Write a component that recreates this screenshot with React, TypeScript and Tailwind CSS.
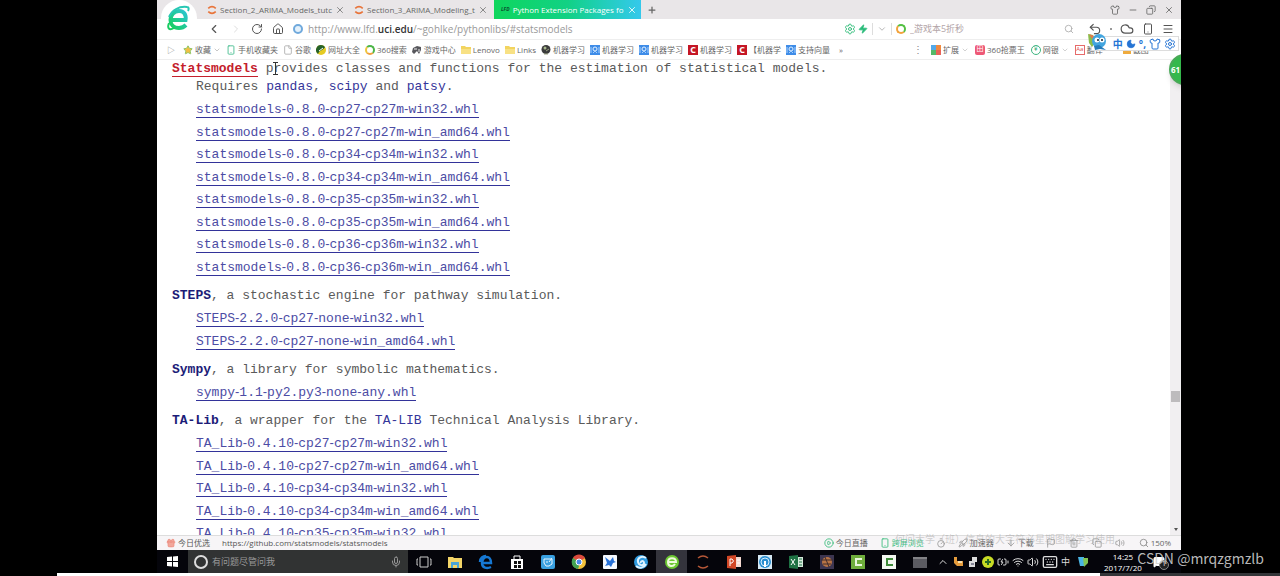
import type { ReactNode } from "react";
import {
    ArrowDown, BatteryCharging, ChevronDown, ChevronLeft, ChevronRight, ChevronUp, Cloud, Copy, File, Flag, Gift,
    House, Keyboard, Menu, MessageSquare, Mic, Minus, Moon, Plus, RotateCw, Rocket, Search, Settings,
    Shirt, Smartphone, Star, Timer, Trash2, Undo2, Volume2, Wifi, X, Zap, CirclePlay,
} from "lucide-react";

const UI_FONT = "font-['Open_Sans','Noto_Sans_CJK_SC',sans-serif]";

type PackageItem = {
    name: string;
    active?: boolean;
    description: ReactNode;
    note?: ReactNode;
    files: string[];
};

const Ref = ({ children }: { children: ReactNode }) => (
    <a href="#ref" className="text-[#35359a]">{children}</a>
);

const packages: PackageItem[] = [
    {
        name: "Statsmodels",
        active: true,
        description: " provides classes and functions for the estimation of statistical models.",
        note: <>Requires <Ref>pandas</Ref>, <Ref>scipy</Ref> and <Ref>patsy</Ref>.</>,
        files: [
            "statsmodels-0.8.0-cp27-cp27m-win32.whl",
            "statsmodels-0.8.0-cp27-cp27m-win_amd64.whl",
            "statsmodels-0.8.0-cp34-cp34m-win32.whl",
            "statsmodels-0.8.0-cp34-cp34m-win_amd64.whl",
            "statsmodels-0.8.0-cp35-cp35m-win32.whl",
            "statsmodels-0.8.0-cp35-cp35m-win_amd64.whl",
            "statsmodels-0.8.0-cp36-cp36m-win32.whl",
            "statsmodels-0.8.0-cp36-cp36m-win_amd64.whl",
        ],
    },
    {
        name: "STEPS",
        description: ", a stochastic engine for pathway simulation.",
        files: ["STEPS-2.2.0-cp27-none-win32.whl", "STEPS-2.2.0-cp27-none-win_amd64.whl"],
    },
    {
        name: "Sympy",
        description: ", a library for symbolic mathematics.",
        files: ["sympy-1.1-py2.py3-none-any.whl"],
    },
    {
        name: "TA-Lib",
        description: <>, a wrapper for the <Ref>TA-LIB</Ref> Technical Analysis Library.</>,
        files: [
            "TA_Lib-0.4.10-cp27-cp27m-win32.whl",
            "TA_Lib-0.4.10-cp27-cp27m-win_amd64.whl",
            "TA_Lib-0.4.10-cp34-cp34m-win32.whl",
            "TA_Lib-0.4.10-cp34-cp34m-win_amd64.whl",
            "TA_Lib-0.4.10-cp35-cp35m-win32.whl",
        ],
    },
];

// the dashes in file names come from a proportional font
function FileLink({ file }: { file: string }) {
    const parts = file.split("-");
    return (
        <a href={"#" + file} className="border-b border-[#33339a] text-[#4c4ca4]">
            {parts.map((part, i) => (
                <span key={i}>
                    {i > 0 && <span className="font-['Liberation_Sans',sans-serif] leading-none">-</span>}
                    {part}
                </span>
            ))}
        </a>
    );
}

function PackageSection({ item }: { item: PackageItem }) {
    return (
        <section className="mb-2">
            <p>
                <a
                    href={"#" + item.name}
                    className={item.active ? "font-bold text-[#c4202c] border-b border-[#c4202c]" : "font-bold text-[#1c1c78]"}
                >
                    {item.name}
                </a>
                {item.description}
            </p>
            {item.note && <p className="pl-6">{item.note}</p>}
            <ul className="mt-[3px] pl-6 leading-[22px]">
                {item.files.map((file) => (
                    <li key={file} className="odd:mb-px">
                        <FileLink file={file} />
                    </li>
                ))}
            </ul>
        </section>
    );
}

function BrowserLogo() {
    return (
        <div className="absolute left-1 top-0 z-10 flex size-9 items-center justify-center rounded-full bg-white">
            <svg viewBox="0 0 24 26" className="h-[26px] w-6" fill="none">
                <defs>
                    <linearGradient id="logo" x1="0" y1="1" x2="1" y2="0">
                        <stop offset="0" stopColor="#16cf5c" />
                        <stop offset="1" stopColor="#2bc5d2" />
                    </linearGradient>
                </defs>
                <path
                    d="M4 15h14.500C19.500 9 16.500 6 12 6c-5 0-8.500 4-8.500 9 0 4.500 3 8 8.500 8 3 0 5-1 7-3"
                    stroke="url(#logo)"
                    strokeWidth="4"
                />
                <path d="M2 12C5 5 12 1 20 2c2 0 2 2 1 4" stroke="#28c8b4" strokeWidth="2" />
                <path d="M2 18c-2 5 0 8 5 5" stroke="#19cd62" strokeWidth="2" />
            </svg>
        </div>
    );
}

function JupyterMark({ className }: { className: string }) {
    return (
        <svg viewBox="0 0 12 12" className={className} fill="none" stroke="#e8743a" strokeWidth="2">
            <path d="M1.500 4Q6 0 10.500 4M1.500 8Q6 12 10.500 8" />
        </svg>
    );
}

function Tab({ title }: { title: string }) {
    return (
        <div className="flex w-[147px] items-center gap-[3px] px-[7px]">
            <JupyterMark className="size-2.5 shrink-0" />
            <button className="flex-1 text-left whitespace-nowrap">{title}</button>
            <button aria-label="Close tab"><X className="size-2.5 text-[#777]" /></button>
        </div>
    );
}

function TabBar() {
    return (
        <div className="flex h-[19px] shrink-0 bg-[#e9e6e8] pl-[43px] text-[8px] text-[#666]">
            <Tab title="Section_2_ARIMA_Models_tutc" />
            <Tab title="Section_3_ARIMA_Modeling_t" />
            <div className="flex w-[147px] items-center gap-[3px] bg-linear-to-r from-[#10d65c] via-[#12d184] to-[#35c8ec] px-[7px] text-white">
                <span className="text-[5px] font-bold text-[#0b5130] italic">LFD</span>
                <button className="flex-1 text-left whitespace-nowrap">Python Extension Packages fo</button>
                <button aria-label="Close tab"><X className="size-2.5" /></button>
            </div>
            <button aria-label="New tab" className="px-1.5"><Plus className="size-2.5 stroke-3" /></button>
            <div className="ml-auto flex items-center gap-2 pr-[7px]">
                <button aria-label="Skin"><Shirt className="size-2.5" /></button>
                <button aria-label="Minimize"><Minus className="size-2.5" /></button>
                <button aria-label="Restore"><Copy className="size-2.5 -scale-x-100" /></button>
                <button aria-label="Close"><X className="size-2.5" /></button>
            </div>
        </div>
    );
}

function AddressBar() {
    return (
        <div className="flex h-[21px] shrink-0 items-center border-b border-[#eee] bg-white pl-[50px] text-[#555]">
            <nav className="flex items-center gap-[9px]">
                <button aria-label="Back"><ChevronLeft className="size-3.5" /></button>
                <button aria-label="Forward"><ChevronRight className="size-3 text-[#ddd]" /></button>
                <button aria-label="Reload"><RotateCw className="size-3" /></button>
                <button aria-label="Home"><House className="size-3" /></button>
                <span className="size-2.5 rounded-full border-2 border-[#70a9dc] bg-[#e4f1fb]" />
            </nav>
            <button className="ml-[5px] text-[10px] text-[#999]">
                http://www.lfd.<b className="font-semibold text-[#333]">uci.edu</b>/~gohlke/pythonlibs/#statsmodels
            </button>
            <div className="ml-auto flex w-[337px] items-center">
                <Settings className="size-3 text-[#39c07f]" />
                <Zap className="ml-0.5 size-2.5 fill-[#28ba78] text-[#28ba78]" />
                <span className="mx-1 h-3 w-px bg-[#ddd]" />
                <ChevronDown className="size-2.5 text-[#aaa]" />
                <span className="mx-1 h-3 w-px bg-[#ddd]" />
                <span className="size-2.5 rounded-full border-2 border-[#55c044] border-b-[#f2a33b] border-l-[#f2a33b]" />
                <input
                    aria-label="Search"
                    placeholder="_游戏本5折秒"
                    className="ml-1 min-w-0 flex-1 text-[9px] placeholder-[#b3a5a8] outline-none"
                />
                <div className="flex items-center gap-2 pr-[7px]">
                    <Search className="size-2.5 text-[#aaa]" />
                    <Undo2 className="ml-1.5 size-3.5" />
                    <span className="size-0.5 rounded-full bg-[#777]" />
                    <Cloud className="size-3.5" />
                    <Smartphone className="size-3" />
                    <button aria-label="Menu"><Menu className="size-3" /></button>
                </div>
            </div>
        </div>
    );
}

const Bubble = () => (
    <svg viewBox="0 0 10 10" className="size-2.5">
        <rect width="10" height="10" fill="#3e8ce8" />
        <circle cx="5" cy="4" r="2" stroke="#e3f1ff" fill="none" />
        <path d="M1 2v6M9 2v6M3 8l2-2 2 2" stroke="#a9d0fa" fill="none" />
    </svg>
);

const RedC = () => (
    <span className="flex size-2.5 items-center justify-center bg-[#c41625] text-[9px] leading-none font-bold text-white">C</span>
);

const Folder = () => (
    <svg viewBox="0 0 10 10" className="size-2.5">
        <path d="M0 1h4l1 1h5v7H0z" fill="#f2d45f" />
        <path d="M0 4h10v5H0z" fill="#f8e184" />
    </svg>
);

const bookmarks: { label: string; icon: ReactNode; more?: boolean }[] = [
    { label: "收藏", icon: <Star className="size-2.5 fill-[#f2bf43] text-[#7cc05c]" />, more: true },
    { label: "手机收藏夹", icon: <Smartphone className="size-2.5 text-[#38b887]" /> },
    { label: "谷歌", icon: <File className="size-2.5 text-[#aaa]" /> },
    {
        label: "网址大全",
        icon: (
            <svg viewBox="0 0 10 10" className="size-2.5">
                <circle cx="5" cy="5" r="5" fill="#e5cb23" />
                <path d="M5 0a5 5 0 0 0-3 9c1-4 6-4 7-7A5 5 0 0 0 5 0" fill="#25622b" />
                <path d="M3 6l4-3" stroke="#fff" />
            </svg>
        ),
    },
    { label: "360搜索", icon: <span className="block size-2.5 rounded-full border-2 border-[#4db648] border-b-[#f0a13c] border-l-[#f0c53c]" /> },
    {
        label: "游戏中心",
        icon: (
            <svg viewBox="0 0 10 10" className="size-2.5">
                <path d="M1 3l4-2 4 1v3L7 9 5 6 2 9 0 7z" fill="#57575c" />
                <path d="M2 4h3M7 4v3" stroke="#eee" />
            </svg>
        ),
    },
    { label: "Lenovo", icon: <Folder /> },
    { label: "Links", icon: <Folder /> },
    {
        label: "机器学习",
        icon: (
            <svg viewBox="0 0 10 10" className="size-2.5">
                <circle cx="5" cy="4.500" r="4.500" fill="#3b3b3b" />
                <circle cx="4" cy="3" r="1.500" fill="#a8b88c" />
                <path d="M5 6l3-2M3 9h4" stroke="#98a080" />
            </svg>
        ),
    },
    { label: "机器学习", icon: <Bubble /> },
    { label: "机器学习", icon: <Bubble /> },
    { label: "机器学习", icon: <RedC /> },
    { label: "【机器学", icon: <RedC /> },
    { label: "支持向量", icon: <Bubble /> },
];

function BookmarkBar() {
    return (
        <div className="flex h-5 shrink-0 items-center border-b border-[#eee] bg-white pl-2.5 text-[8px] text-[#666]">
            <span className="w-4 text-[#888]">▷</span>
            <div className="flex items-center gap-[5px] whitespace-nowrap">
                {bookmarks.map((b, i) => (
                    <a key={i} href="#bookmark" className="flex items-center gap-0.5">
                        {b.icon}
                        {b.label}
                        {b.more && <ChevronDown className="size-2 text-[#aaa]" />}
                    </a>
                ))}
                <span className="pl-1">»</span>
            </div>
            <div className="ml-auto flex w-[268px] items-center gap-0.5 whitespace-nowrap">
                <span className="mr-1.5 text-[10px] text-[#888]">⋮</span>
                <span className="grid size-2.5 grid-cols-2">
                    <i className="bg-[#54a9e8]" /><i className="bg-[#f0893f]" />
                    <i className="bg-[#54b968]" /><i className="bg-[#e96258]" />
                </span>
                扩展
                <ChevronDown className="size-2 text-[#bbb]" />
                <span className="ml-1 flex size-2.5 items-center justify-center rounded-xs bg-[#ee5876] text-[7px] text-white">田</span>
                360抢票王
                <span className="ml-1 flex size-2.5 items-center justify-center rounded-full border border-[#3eb681] text-[7px] text-[#20a56a]">¥</span>
                网银
                <ChevronDown className="size-2 text-[#bbb]" />
                <span className="ml-1 flex size-2.5 items-center justify-center border border-[#e66a6a] text-[6px] text-[#e04c4c]">Aa</span>
                翻译
                <ChevronDown className="size-2 text-[#bbb]" />
                <span className="ml-2 size-2 bg-[#efab3e]" />
                截图
            </div>
        </div>
    );
}

// input method toolbar that floats over the bookmarks
function ImeBar() {
    return (
        <div className="absolute top-9 right-0.5 flex h-[15px] w-[88px] items-center justify-end gap-[3px] border border-[#ddd] bg-white pr-0.5 text-[#2574d4]">
            <svg viewBox="0 0 20 18" className="absolute -top-1 -left-1 h-[18px] w-5">
                <path d="M0 1l5 1 3 7-4 5-3-4z" fill="#8bbd4b" />
                <path d="M1 1l5 2-2 3z" fill="#e7764c" />
                <circle cx="11" cy="8" r="7" fill="#42a5df" />
                <path d="M6 13l5-1 7 5-6-1-5 1z" fill="#257cbb" />
                <circle cx="9" cy="7" r="2.500" fill="#fff" />
                <circle cx="14" cy="7" r="2.500" fill="#fff" />
                <circle cx="10" cy="7" r="1" fill="#123" />
                <circle cx="14" cy="7" r="1" fill="#123" />
            </svg>
            <span className="text-[10px] leading-none font-bold">中</span>
            <Moon className="size-2.5 fill-current" />
            <span className="text-[10px] leading-none font-bold">°,</span>
            <Shirt className="size-3" />
            <Settings className="size-3" />
        </div>
    );
}

function Scrollbar() {
    return (
        <div className="flex w-[11px] shrink-0 flex-col items-center bg-[#f1eff1]">
            <div className="grow-[71]" />
            <div className="h-[11px] w-[9px] bg-[#bdbbbd]" />
            <div className="grow-[27]" />
            <div className="mb-1 border-x-2 border-t-3 border-x-transparent border-t-[#555]" />
        </div>
    );
}

function StatusBar() {
    return (
        <div className="relative flex h-[15px] shrink-0 items-center border-t border-[#ddd] bg-[#f7f5f7] pr-2.5 pl-[9px] text-[8px] whitespace-nowrap text-[#555]">
            <Gift className="mr-0.5 size-2.5 fill-[#f2a79b] text-[#ed8d80]" />
            今日优选
            <span className="ml-3">https://github.com/statsmodels/statsmodels</span>
            <div className="ml-auto flex items-center gap-0.5 text-[#666]">
                <CirclePlay className="size-2.5 text-[#32b977]" />
                今日直播
                <Smartphone className="ml-2.5 size-2.5 text-[#32b977]" />
                <span className="text-[#43c287]">跨屏浏览</span>
                <Timer className="ml-2.5 size-2.5 text-[#999]" />
                <Rocket className="ml-2.5 size-2.5 text-[#999]" />
                加速器
                <ArrowDown className="ml-2.5 size-2.5 text-[#999]" />
                下载
                <Flag className="ml-2.5 size-2.5 text-[#999]" />
                <Trash2 className="ml-[11px] size-2.5 text-[#999]" />
                <Copy className="ml-[11px] size-2.5 text-[#999]" />
                <Volume2 className="ml-[11px] size-2.5 text-[#999]" />
                <Search className="ml-3 size-2.5 text-[#888]" />
                150%
            </div>
            <span className="absolute right-[66px] bottom-1.5 text-[10px] leading-none text-[#999]/45">
                何问大学（班）信息的大字符必星期图解学习使用
            </span>
        </div>
    );
}

const apps: { name: string; active?: boolean; icon: ReactNode }[] = [
    {
        name: "Task view",
        icon: <path d="M4 3h8v10H4zM2 5H1v6h1M14 5h1v6h-1" fill="none" stroke="#ccc" />,
    },
    {
        name: "Explorer",
        icon: <><path d="M1 3h5l1 1h8v10H1z" fill="#f3d568" /><path d="M4 8h8v6h-2v-3H6v3H4z" fill="#4aa5d8" /></>,
    },
    {
        name: "Edge",
        icon: <path d="M4 9h9c0-8-8-8-9 0 0 5 5 6 9 4M2 8c0-4 3-6 6-6" fill="none" stroke="#1678d3" strokeWidth="2.500" />,
    },
    {
        name: "Store",
        icon: (
            <>
                <path d="M2 5h12v10H2z" fill="#fff" />
                <path d="M5 5V2h6v3" fill="none" stroke="#fff" />
                <path d="M5 7h3v3H5zM9 7h3v3H9zM5 11h3v3H5zM9 11h3v3H9z" fill="#111" />
            </>
        ),
    },
    {
        name: "Notes",
        icon: <><rect x="1" y="1" width="14" height="14" rx="2" fill="#39a0e0" /><path d="M4 5h8v5l-3 2H6L4 9zM6 8h2M9 8l3-4" fill="none" stroke="#e9f6ff" /></>,
    },
    {
        name: "Chrome",
        icon: (
            <>
                <circle cx="8" cy="8" r="7" fill="#f2c13b" />
                <path d="M2 4a7 7 0 0 1 12 0L8 8z" fill="#dc4a3d" />
                <path d="M2 4a7 7 0 0 0 5 11l2-6z" fill="#43a352" />
                <circle cx="8" cy="8" r="3" fill="#4a8bea" stroke="#fff" />
            </>
        ),
    },
    {
        name: "Bird",
        icon: <><rect x="1" y="1" width="14" height="14" rx="1" fill="#f5f9ff" /><path d="M3 3l5 4 3-4 1 4 2 1-3 1-2 4-2-2-4 1 2-3z" fill="#2872d8" /></>,
    },
    {
        name: "Swirl",
        icon: <><circle cx="8" cy="8" r="7" fill="#2f9ade" /><path d="M13 4C9 1 4 4 5 8s6 4 6 1-4-2-3 0M3 12c3 3 8 2 10-2" fill="none" stroke="#dff3ff" strokeWidth="2" /></>,
    },
    {
        name: "Browser",
        active: true,
        icon: <><circle cx="8" cy="8" r="7" fill="#6cc832" /><path d="M4 8h8c0-5-8-5-8 0s5 5 7 2" fill="none" stroke="#effbdc" strokeWidth="2" /></>,
    },
    {
        name: "Jupyter",
        icon: <path d="M3 4Q8 0 13 4M3 12Q8 16 13 12" fill="none" stroke="#b75838" strokeWidth="1.500" />,
    },
    {
        name: "PowerPoint",
        icon: <><path d="M8 3h7v10H8z" fill="#f5d9d0" /><path d="M1 2l9-1v14l-9-1z" fill="#d24726" /><path d="M4 12V5h2q3 2 0 4H4M11 6h3M11 9h3" fill="none" stroke="#fff" /></>,
    },
    {
        name: "Radio",
        icon: <><rect x="1" y="1" width="14" height="14" fill="#d7e9f4" /><circle cx="8" cy="8" r="6" fill="#2b8ed0" /><circle cx="8" cy="8" r="4" fill="none" stroke="#d8efff" /><path d="M8 7v6" stroke="#fff" strokeWidth="2" /></>,
    },
    {
        name: "Excel",
        icon: <><path d="M8 3h7v10H8z" fill="#d5eadb" /><path d="M1 2l9-1v14l-9-1z" fill="#1f7244" /><path d="M3 5l4 6M7 5l-4 6" stroke="#fff" /><path d="M11 5h3M11 8h3M11 11h3" stroke="#1f7244" /></>,
    },
    {
        name: "Brain",
        icon: <><rect x="1" y="1" width="14" height="14" fill="#3c3550" /><circle cx="8" cy="8" r="5" fill="#b87445" /><path d="M2 6h12M4 10h8M6 3l4 10" stroke="#412c2d" /></>,
    },
    {
        name: "Camtasia",
        icon: <><rect x="1" y="1" width="14" height="14" fill="#6fae3c" /><path d="M12 5H6v6h6" fill="none" stroke="#e9f7dc" strokeWidth="2" /></>,
    },
    {
        name: "Recorder",
        icon: <><rect x="1" y="1" width="14" height="14" fill="#f4f8f2" /><path d="M12 5H6v6h6" fill="none" stroke="#3f8b3a" strokeWidth="2" /></>,
    },
    {
        name: "Terminal",
        icon: <><rect x="1" y="3" width="14" height="11" fill="#5b5b62" /><path d="M1 4h14" stroke="#aaa" /></>,
    },
];

function Taskbar() {
    return (
        <div className="flex h-[23px] shrink-0 items-center bg-[#05050b] text-white">
            <button aria-label="Start" className="flex w-[31px] justify-center">
                <svg viewBox="0 0 11 11" className="size-[11px]" fill="#fff">
                    <path d="M0 1l5-.5V5H0zM6 .5l5-.5v5H6zM0 6h5v4.500L0 10zM6 6h5v5l-5-.5z" />
                </svg>
            </button>
            <div className="flex h-full w-[220px] items-center gap-1 bg-[#313333] px-1.5">
                <span className="size-3.5 shrink-0 rounded-full border-2 border-[#ddd]" />
                <input
                    aria-label="Cortana"
                    placeholder="有问题尽管问我"
                    className="min-w-0 flex-1 text-[9px] placeholder-[#999] outline-none"
                />
                <Mic className="size-3 text-[#999]" />
            </div>
            {apps.map((app) => (
                <button
                    key={app.name}
                    aria-label={app.name}
                    className={app.active ? "flex h-full w-[31px] items-center justify-center bg-[#34343c]" : "flex h-full w-[31px] items-center justify-center"}
                >
                    <svg viewBox="0 0 16 16" className="size-4">{app.icon}</svg>
                </button>
            ))}
            <div className="flex items-center gap-[3px] pl-0.5 text-[#ddd]">
                <ChevronUp className="size-3" />
                <svg viewBox="0 0 12 12" className="size-3"><path d="M2 1h3v4h6v5H5L2 7z" fill="#e59c3c" /><path d="M6 5h4v2H6z" fill="#f9dfab" /></svg>
                <svg viewBox="0 0 12 12" className="size-3"><path d="M5 1h5v5H5zM2 5h6v6H2z" fill="#ddd" /><path d="M4 8h3" stroke="#335" /></svg>
                <svg viewBox="0 0 12 12" className="size-3"><circle cx="6" cy="6" r="6" fill="#c9dc25" /><path d="M6 3v6M3 6h6" stroke="#286b22" strokeWidth="2" /></svg>
                <BatteryCharging className="size-3" />
                <Wifi className="size-3" />
                <Volume2 className="size-3" />
                <Keyboard className="size-4" />
                <span className="text-[9px]">中</span>
                <svg viewBox="0 0 12 12" className="ml-1 size-3"><path d="M1 1h6v9H3z" fill="#4ab4e4" /><path d="M6 2h5v5l-4 4z" fill="#80c454" /></svg>
            </div>
            <div className="ml-auto w-11 text-center text-[8px] leading-[11px]">
                <div>14:25</div>
                <div>2017/7/20</div>
            </div>
            <div className="relative mr-3 ml-2 w-4">
                <MessageSquare className="size-3 fill-white" />
                <span className="absolute top-1 left-1.5 flex size-2.5 items-center justify-center rounded-full border border-[#888] bg-[#222] text-[7px]">1</span>
            </div>
        </div>
    );
}

export default function App() {
    return (
        <div className={`relative flex h-screen flex-col overflow-hidden bg-black ${UI_FONT}`}>
            <div className="relative mr-[99px] ml-[157px] flex min-h-0 flex-1 flex-col overflow-hidden bg-white">
                <BrowserLogo />
                <TabBar />
                <AddressBar />
                <BookmarkBar />
                <ImeBar />
                <div className="flex min-h-0 flex-1">
                    <main className="min-w-0 flex-1 overflow-hidden pl-[15px] font-['Liberation_Mono',monospace] text-[13px] leading-[18px] text-[#5a5a5a]">
                        {packages.map((item) => (
                            <PackageSection key={item.name} item={item} />
                        ))}
                    </main>
                    <Scrollbar />
                </div>
                <svg viewBox="0 0 5 13" className="absolute top-[62px] left-[116px] h-[13px] w-[5px]" fill="none" stroke="#333">
                    <path d="M0 .5h5M2.500 0v13M0 12.500h5" />
                </svg>
                <div className="absolute top-[54px] -right-[19px] size-[31px] rounded-full border-2 border-[#49a957] bg-[#35b84c] pt-2 text-[8px] font-bold text-white shadow-md">
                    61
                </div>
                <StatusBar />
                <Taskbar />
            </div>
            <div className="ml-[57px] flex h-[3px] shrink-0">
                <div className="grow-[1043] bg-white" />
                <div className="grow-[180] bg-[#333538]" />
            </div>
            <span className="absolute right-4 bottom-2 font-['Noto_Sans_CJK_SC',sans-serif] text-[14px] leading-5 text-[#cfcfcf]/90">
                CSDN @mrqzgmzlb
            </span>
        </div>
    );
}
